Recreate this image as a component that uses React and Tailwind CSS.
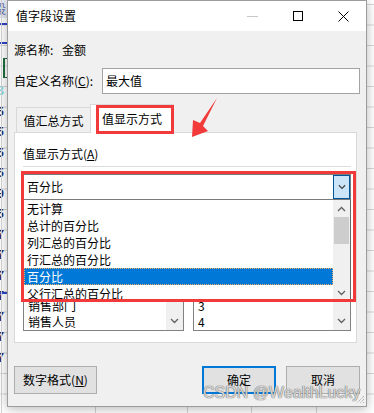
import React from 'react';

const cjk = "[font-family:'Noto_Sans_CJK_SC','Microsoft_YaHei',sans-serif]";

function ChevDown({ color = '#606060', w = 9 }) {
  return (
    <svg width={w} height="6" viewBox="0 0 9 6">
      <path d="M1 1l3.5 3.5L8 1" fill="none" stroke={color} strokeWidth="1.3" />
    </svg>
  );
}

function ChevUp({ color = '#606060' }) {
  return (
    <svg width="9" height="6" viewBox="0 0 9 6">
      <path d="M1 5l3.5-3.5L8 5" fill="none" stroke={color} strokeWidth="1.3" />
    </svg>
  );
}

// spreadsheet peeking out behind the dialog
function Sheet() {
  const rows = ['8', '5', '5', '5', '5', '9', '5', '7', '7', '7', '7', '7', '7', '7'];
  return (
    <>
      <div className="absolute left-0 top-0 w-[7px] h-[18px] bg-[#e6e8f2] text-[#5a6aa8] overflow-hidden">
        <span className="absolute left-[-6px] top-[1px] text-[12px] leading-[16px]">设</span>
      </div>
      <div className="absolute left-0 top-[23px] w-[7px] h-[2px] bg-[#2f42c8]" />
      <div className="absolute left-0 top-[42px] w-[7px] h-[2px] bg-[#2f42c8]" />
      <div className="absolute left-[3px] top-[58px] w-[4px] h-[20px] border-l-2 border-t border-b border-[#1f6b3d]" />
      <div className="absolute left-0 top-[80px] w-[7px] flex flex-col overflow-hidden">
        {rows.map((r, i) => (
          <div key={i} className={`h-[20.5px] leading-[20px] text-[12px] font-bold ml-[-3px] ${i === 0 ? 'text-[#7fd6d6]' : 'text-[#2b2f6e]'}`}>
            {r}
          </div>
        ))}
      </div>
      <div className="absolute left-0 top-[292px] w-[7px] h-[2px] bg-[#2f42c8]" />
      <div className="absolute left-[1px] top-0 w-px h-[413px] bg-[#d4d4d4]" />
      <div className="absolute left-[95px] top-[400px] w-px h-[13px] bg-[#d4d4d4]" />
      <div className="absolute left-[187px] top-[400px] w-px h-[13px] bg-[#d4d4d4]" />
      <div className="absolute left-[251px] top-[400px] w-px h-[13px] bg-[#d4d4d4]" />
      <div className="absolute left-[316px] top-[400px] w-px h-[13px] bg-[#d4d4d4]" />
    </>
  );
}

export default function App() {
  const options = ['无计算', '总计的百分比', '列汇总的百分比', '行汇总的百分比', '百分比', '父行汇总的百分比'];

  return (
    <div className={`relative w-[374px] h-[413px] overflow-hidden bg-white bg-[linear-gradient(#d6d6d6_1px,transparent_1px)] bg-[size:100%_20.5px] bg-[position:0_4px] text-[12px] text-black ${cjk}`}>
      <Sheet />

      {/* dialog window */}
      <div className="absolute left-[7px] top-0 w-[360px] h-[407px] flex flex-col border border-[#9c9c9c] bg-[#f0f0f0] shadow-[0_2px_10px_rgba(0,0,0,0.28)]">
        <div className="h-[30px] bg-white flex items-center pl-[8px] shrink-0">
          <span className="leading-[16px]">值字段设置</span>
          <div className="ml-auto flex h-full">
            <div className="w-[46px] flex items-center justify-center">
              <div className="w-[11px] h-px bg-[#c8c8c8]" />
            </div>
            <div className="w-[46px] flex items-center justify-center">
              <div className="w-[10px] h-[10px] border border-black" />
            </div>
            <div className="w-[45px] flex items-center justify-center">
              <svg width="11" height="11" viewBox="0 0 11 11">
                <path d="M0.5 0.5l10 10M10.5 0.5l-10 10" stroke="#000" strokeWidth="1" />
              </svg>
            </div>
          </div>
        </div>

        <div className="flex flex-col pl-[6px] pr-[6px]">
          <div className="mt-[11px] h-[16px] flex items-center leading-[16px]">
            <span className="w-[48px]">源名称:</span>
            <span>金额</span>
          </div>

          <div className="mt-[10px] h-[26px] flex items-center">
            <span className="w-[88px] leading-[16px]">
              自定义名称(<span className="underline">C</span>):
            </span>
            <div className="flex-1 h-[26px] border border-[#a3a3a3] bg-white pl-[3px] flex items-center leading-[16px]">
              最大值
            </div>
          </div>

          {/* tabs */}
          <div className="mt-[10px] h-[28px] flex items-end pl-[2px] relative z-10">
            <div className="w-[74px] h-[25px] border-t border-l border-[#d9d9d9] flex items-center justify-center pt-px leading-[16px]">
              值汇总方式
            </div>
            <div className="w-[84px] h-[29px] -mb-px bg-white border border-b-0 border-[#d9d9d9] flex items-center justify-center leading-[16px]">
              值显示方式
            </div>
          </div>

          {/* tab panel */}
          <div className="relative w-[343px] h-[211px] bg-white border border-[#d9d9d9] pl-[8px] pt-[13px]">
            <div className="h-[16px] leading-[16px]">
              值显示方式(<span className="underline">A</span>)
            </div>
            <div className="mt-[4px] w-[328px] h-px bg-[#dcdcdc]" />
            <div className="mt-[7px] w-[328px] h-[26px] border border-[#7a7a7a] bg-white flex items-center">
              <span className="pl-[3px] leading-[16px]">百分比</span>
              <div className="ml-auto w-[17px] h-full bg-[#cce4f7] border border-[#005499] flex items-center justify-center">
                <ChevDown color="#404040" w={8} />
              </div>
            </div>

            <div className="mt-[74px] flex gap-[9px]">
              <div className="w-[161px] h-[57px] border border-[#828282] bg-white flex">
                <div className="flex-1 flex flex-col justify-end overflow-hidden pl-[4px]">
                  <div className="h-[16px] leading-[16px] shrink-0">销售部门</div>
                  <div className="h-[16px] leading-[16px] shrink-0">销售人员</div>
                </div>
                <div className="w-[17px] bg-[#f0f0f0] flex flex-col justify-end items-center pb-[6px]">
                  <ChevDown />
                </div>
              </div>
              <div className="w-[158px] h-[57px] border border-[#828282] bg-white flex">
                <div className="flex-1 flex flex-col justify-end overflow-hidden pl-[4px]">
                  <div className="h-[16px] leading-[16px] shrink-0">3</div>
                  <div className="h-[16px] leading-[16px] shrink-0">4</div>
                </div>
                <div className="w-[17px] bg-[#f0f0f0] flex flex-col justify-end items-center pb-[6px]">
                  <ChevDown />
                </div>
              </div>
            </div>

            {/* open dropdown list */}
            <div className="absolute left-[8px] top-[67px] w-[328px] h-[101px] border border-t-0 border-[#646464] bg-white flex overflow-hidden">
              <div className="flex-1 flex flex-col">
                {options.map((o) => (
                  <div
                    key={o}
                    className={`h-[17px] leading-[17px] pl-[3px] shrink-0 ${o === '百分比' ? 'bg-[#0078d7] text-white outline-1 outline-dotted outline-[#f0b060] -outline-offset-1' : ''}`}
                  >
                    {o}
                  </div>
                ))}
              </div>
              <div className="w-[17px] bg-[#f0f0f0] flex flex-col items-center">
                <div className="h-[17px] flex items-center justify-center">
                  <ChevUp />
                </div>
                <div className="w-[15px] h-[27px] bg-[#cdcdcd]" />
                <div className="mt-auto h-[17px] mb-[-1px] flex items-center justify-center">
                  <ChevDown />
                </div>
              </div>
            </div>

            {/* red annotation around the list */}
            <div className="absolute left-[6px] top-[38px] w-[335px] h-[131px] border-[3px] border-[#f23a3a] pointer-events-none" />
          </div>

          {/* buttons */}
          <div className="mt-[23px] h-[28px] flex">
            <div className="w-[83px] h-full border border-[#adadad] bg-[#e1e1e1] flex items-center justify-center leading-[16px]">
              数字格式(<span className="underline">N</span>)
            </div>
            <div className="ml-auto w-[74px] h-full border-2 border-[#0078d7] bg-[#e1e1e1] flex items-center justify-center leading-[16px]">
              确定
            </div>
            <div className="ml-[10px] w-[74px] h-full border border-[#adadad] bg-[#e1e1e1] flex items-center justify-center leading-[16px]">
              取消
            </div>
          </div>
        </div>

        <svg className="absolute right-[1px] bottom-[2px]" width="9" height="9" viewBox="0 0 9 9">
          <path d="M8 1L1 8M8 4L4 8M8 7L7 8" stroke="#9a9a9a" strokeWidth="1" strokeDasharray="1 1" />
        </svg>
      </div>

      {/* red annotation around the tab */}
      <div className="absolute z-20 left-[96px] top-[105px] w-[78px] h-[29px] border-[3px] border-[#f23a3a] pointer-events-none" />

      <svg className="absolute z-20 left-0 top-0 pointer-events-none" width="374" height="413" viewBox="0 0 374 413">
        <polygon points="217,98 200,123 193,120 192,137 208,131 203,126" fill="#f23a3a" />
      </svg>

      <div className="absolute z-20 left-[203px] top-[385px] text-[16px] leading-[16px] whitespace-nowrap [font-family:'Liberation_Sans',Arial,sans-serif] text-[rgba(235,235,235,0.85)] [text-shadow:0_0_1px_#666,0_0_1px_#666] pointer-events-none">
        CSDN @WealthLucky
      </div>
    </div>
  );
}
